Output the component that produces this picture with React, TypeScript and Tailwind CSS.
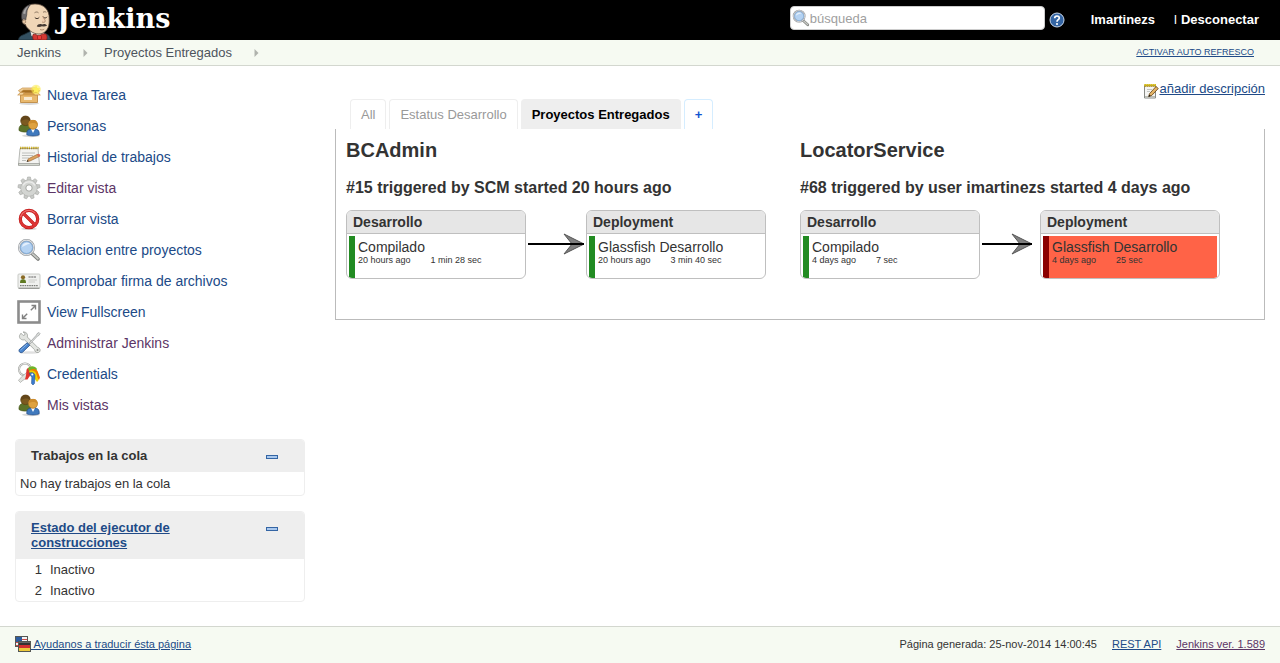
import type { ReactNode } from "react";

const HEAD_ICON = (
  <svg viewBox="0 0 36 40" className="h-10 w-9 shrink-0" aria-hidden="true">
    <path d="M1.500 40 C2 36.500 4 35.500 7 34.500 L14 31 L26 32 L32 35.500 L34 40 Z" fill="#335061" stroke="#1c2d37" strokeWidth="0.800" />
    <path d="M13 29 L14.500 36 L20 38 L27 34.500 L26.500 29 Z" fill="#efe9df" />
    <path d="M5.500 20 C4.500 10 9 4 18 4 C27 4 32.500 10 32.200 18.500 C32.500 25 31.500 31 25 33.500 C20 35 14.500 33 11 28.500 C9.500 27 8.800 26 8.500 24.500 C6 24.500 4.500 22 5.500 20 Z" fill="#f0d6b7" stroke="#5b4a3c" strokeWidth="0.800" />
    <path d="M5 20 C3.200 12.500 6.500 6.500 13.500 4.500 C11.500 7 10 9.500 9.800 13 C10 15.500 9 16.500 8.800 20 C7.500 18.800 6.200 18.800 5 20 Z" fill="#6d6b6d" stroke="#3a3839" strokeWidth="0.600" />
    <path d="M6 13.500 C7 9.500 9 7 11.500 6 C9.500 8.500 8.500 11 8.300 14 Z" fill="#a9a8a8" />
    <path d="M5.800 21 C7 19 9 20 8.600 22.500 C8 23.600 7.200 23.400 6.500 22.800" fill="#e6c6a2" stroke="#7c604a" strokeWidth="0.600" />
    <path d="M17.500 12.800 C19 11.700 20.500 11.800 21.500 12.800 M26 12.300 C27.200 11.500 28.500 11.600 29.300 12.300" fill="none" stroke="#6f5a49" strokeWidth="0.800" />
    <path d="M17.800 17.500 C19 19 21.200 19 22.300 17.300 M26.300 17 C27.500 18.400 29.300 18.200 30 16.800" fill="none" stroke="#3b2f27" strokeWidth="1" />
    <path d="M25.500 16 C27 19 29 20.500 28 21.900 C27 22.600 25.800 22.400 25 21.900" fill="#f0cdb0" stroke="#9a7558" strokeWidth="0.700" />
    <path d="M19.800 26.500 C20.500 24.300 23 23.600 25 24.500 C27 23.400 29.300 24 30 25.800 C28 26.800 26.300 26.700 25 26.200 C23.300 27 21.500 27.200 19.800 26.500 Z" fill="#453a34" />
    <path d="M23 29.500 C24.500 30.200 26 30 27.200 29.200" fill="none" stroke="#9a7558" strokeWidth="0.800" />
    <path d="M16 34.500 C18.500 33.500 20.500 35.500 22 36.500 C24 34 27.500 33 29.500 34.500 C30.300 36.500 30.300 38.500 29.500 40 L16.500 40 C15.500 38 15.500 36 16 34.500 Z" fill="#d33833" stroke="#7a1a17" strokeWidth="0.700" />
    <rect x="20.500" y="35.300" width="4" height="4.200" rx="1.200" fill="#ef3d3a" stroke="#7a1a17" strokeWidth="0.600" />
  </svg>
);

function Svg({ children }: { children: ReactNode }) {
  return (
    <svg viewBox="0 0 24 24" className="size-6 shrink-0" aria-hidden="true">
      {children}
    </svg>
  );
}

const PackageIcon = (
  <Svg>
    <ellipse cx="12" cy="20.500" rx="10" ry="1.500" fill="#000" opacity="0.150" />
    <path d="M3.500 9.500 H20.500 V19.500 H3.500 Z" fill="#e9b96e" stroke="#b98237" strokeWidth="0.800" />
    <path d="M4 10 H20 V12.500 H4 Z" fill="#d29a49" />
    <path d="M4 9.500 L5.500 5.500 H18.500 L20 9.500 Z" fill="#a87020" stroke="#b98237" strokeWidth="0.800" />
    <path d="M3.500 9.500 L0.700 12 H5.500 L7.500 9.500 Z M20.500 9.500 L23.300 12 H17.500 L16.500 9.500 Z" fill="#f5d49b" stroke="#c69047" strokeWidth="0.700" />
    <path d="M5.500 5 L1.500 7.500 L3 9.500 L6.500 7 H17.500 L21 9.500 L22.500 7.500 L18.500 5 Z" fill="#f2d097" stroke="#c69047" strokeWidth="0.700" />
    <rect x="7" y="14" width="8" height="3" fill="#f9ead0" />
    <circle cx="19" cy="6.500" r="4.800" fill="#fce94f" opacity="0.550" />
    <path d="M19 2 L20.200 5.100 L23.500 5.400 L21 7.500 L21.500 10.500 L18.900 8.800 L16.200 10 L17.200 7.200 L15 4.900 L18 5 Z" fill="#fdf05a" />
  </Svg>
);

const UsersIcon = (
  <Svg>
    <ellipse cx="14" cy="21.800" rx="9" ry="1.400" fill="#000" opacity="0.150" />
    <path d="M2 16.500 C1.700 12 4 10 8.500 10 C13 10 15 12 14.500 17 C10 18.500 5 18.500 2 16.500 Z" fill="#5c7329" stroke="#435617" strokeWidth="0.700" />
    <circle cx="8.500" cy="6.800" r="4.800" fill="#7c5a20" stroke="#5b3f10" strokeWidth="0.700" />
    <path d="M4.200 7 C3.500 3 6 1.700 9 1.900 C12 2 13.500 4 13 7 C11.500 4.800 7 5 4.200 7 Z" fill="#63461a" />
    <path d="M9.800 20.800 C9.500 16 11.500 14.800 16 14.800 C20.500 14.800 22.500 16 22.200 20.800 C19 22.300 13 22.300 9.800 20.800 Z" fill="#3f79bd" stroke="#204a87" strokeWidth="0.700" />
    <path d="M14 15 L16 19 L18 15 Z" fill="#fff" />
    <circle cx="16" cy="10.800" r="4.500" fill="#dfa23f" stroke="#a97422" strokeWidth="0.700" />
    <path d="M11.600 10.500 C11.200 7 13.500 5.900 16 6 C19.300 5.900 21 8 20.400 11 C18.500 8.500 15 8.500 11.600 10.500 Z" fill="#cd8c2c" />
  </Svg>
);

const NotepadIcon = (
  <Svg>
    <path d="M3 3.500 H21 L22.500 19.500 H1.500 Z" fill="#f4f4f2" stroke="#a5a7a2" strokeWidth="0.800" />
    <path d="M1.500 18.500 H22.500 V20.500 H1.500 Z" fill="#d3d7cf" stroke="#888a85" strokeWidth="0.600" />
    <path d="M3 3 H21.500" stroke="#a88a20" strokeWidth="2.600" strokeDasharray="1.300 0.900" />
    <path d="M3 2.500 H21.500" stroke="#d8c03c" strokeWidth="1.200" strokeDasharray="1.300 0.900" />
    <path d="M5 8 H18 M5 10.500 H16 M5 13 H12 M5 15.500 H9" stroke="#b0b2ae" strokeWidth="0.800" />
    <path d="M10 16.500 L11.300 13.800 L20.500 9.300 L22.300 11.500 L13 16 Z" fill="#dca25e" stroke="#8e6030" strokeWidth="0.600" />
    <path d="M19.800 9.600 L21 9 C22.800 8.500 24 10.200 22.700 11.400 L21.500 12 Z" fill="#d96a54" />
    <path d="M9.700 16.800 L10.600 15 L11.700 16.300 Z" fill="#222" />
  </Svg>
);

const GearIcon = (
  <Svg>
    <g fill="#c9cbc8" stroke="#a9aba7" strokeWidth="0.600">
      {[0, 40, 80, 120, 160, 200, 240, 280, 320].map((a) => (
        <path key={a} d="M9.800 5 L10.600 1 H13.400 L14.200 5 Z" transform={`rotate(${a} 12 12)`} />
      ))}
      <circle cx="12" cy="12" r="8.200" fill="#d3d5d2" />
    </g>
    <circle cx="12" cy="12" r="7.600" fill="#d3d5d2" />
    <path d="M6 9.500 A6.700 6.700 0 0 1 18 9.500" fill="none" stroke="#ececeb" strokeWidth="1.300" />
    <circle cx="12" cy="12" r="3.200" fill="#fff" stroke="#a3a5a1" strokeWidth="1" />
  </Svg>
);

const StopIcon = (
  <Svg>
    <ellipse cx="12" cy="21.800" rx="8" ry="1.300" fill="#000" opacity="0.150" />
    <circle cx="12" cy="12" r="8.700" fill="#fff" stroke="#b81414" strokeWidth="3.200" />
    <path d="M5.900 5.900 L18.100 18.100" stroke="#b81414" strokeWidth="3.400" />
    <circle cx="12" cy="12" r="8.700" fill="none" stroke="#dd3535" strokeWidth="2.200" />
    <path d="M5.900 5.900 L18.100 18.100" stroke="#dd3535" strokeWidth="2.400" />
    <path d="M3.500 10 A8.800 8.800 0 0 1 18.200 5.800" fill="none" stroke="#f07c7c" strokeWidth="0.900" />
  </Svg>
);

const MagnifierArt = (
  <>
    <path d="M15 15.500 L21 21" stroke="#7c7e7b" strokeWidth="3.600" strokeLinecap="round" />
    <path d="M15.300 15.700 L20.800 20.700" stroke="#c8cac6" strokeWidth="1.800" strokeLinecap="round" />
    <circle cx="9.500" cy="9.500" r="7.400" fill="#a9caee" stroke="#8e9195" strokeWidth="2.200" />
    <circle cx="9.500" cy="9.500" r="7.400" fill="none" stroke="#dde0e3" strokeWidth="1.100" />
    <circle cx="9.500" cy="9.500" r="6" fill="#b4d2f2" stroke="#7ba6d3" strokeWidth="0.800" />
    <path d="M5 9 A5 5 0 0 1 13 5.700 C10 6 7 8 5 9 Z" fill="#e3effc" />
  </>
);
const SearchIcon = <Svg>{MagnifierArt}</Svg>;

const IdCardIcon = (
  <Svg>
    <rect x="1" y="5" width="22" height="14" rx="1" fill="#f0f1ef" stroke="#c3c5c1" strokeWidth="0.900" />
    <path d="M1.500 19.300 H22.500" stroke="#888a85" />
    <circle cx="6" cy="8.300" r="2.100" fill="#8a6a25" />
    <path d="M3 14 C3 11 4 10.300 6 10.300 C8.200 10.300 9 11 9 14 Z" fill="#5f7a22" />
    <path d="M11.500 8 H19" stroke="#666" strokeWidth="1.100" strokeDasharray="2.200 0.500" />
    <path d="M11.500 11 H20 M11.500 13 H18" stroke="#c5c7c3" strokeWidth="0.900" />
    <path d="M3 16.600 H21" stroke="#7b7d79" strokeWidth="1.100" strokeDasharray="1.600 0.700" />
  </Svg>
);

const FullscreenIcon = (
  <Svg>
    <rect x="1.500" y="1.500" width="21" height="21" fill="#fff" stroke="#8c8c8c" strokeWidth="2.600" />
    <path d="M13.800 10.200 L18.300 5.700 M14.500 5.500 H18.500 V9.500 M10.200 13.800 L5.700 18.300 M5.500 14.500 V18.500 H9.500" fill="none" stroke="#808080" strokeWidth="1.400" />
  </Svg>
);

const ToolsIcon = (
  <Svg>
    <ellipse cx="12" cy="21.500" rx="10" ry="1.300" fill="#000" opacity="0.120" />
    <path d="M2.500 4.500 L4 2.200 L6.200 4.500 L7.800 4 L8 2.200 L6 1 C9.500 0.800 11 3 10.300 6 L20.800 16.500 C23.500 17 24 20.500 21.500 21.500 C19 22 17.800 20.500 17.700 18.800 L7.500 8.800 C4.500 9.300 2 7.700 2.500 4.500 Z" fill="#e2e4e0" stroke="#9c9f9a" strokeWidth="0.800" />
    <circle cx="20.500" cy="19" r="1" fill="#8b8e89" />
    <path d="M12 12.200 L19.500 4 L20 2.700 L22 1.500 L23 2.500 L21.800 4.500 L20.500 5 L13 13 Z" fill="#dfe1dd" stroke="#979a9c" strokeWidth="0.700" />
    <path d="M10.200 11.800 L12.800 14.200 L5.500 21.300 C3.500 22.500 1.200 20.500 2.300 18.500 Z" fill="#4a86cf" stroke="#204a87" strokeWidth="0.800" />
    <path d="M10 13.200 L3.500 19.200" stroke="#86b2e6" strokeWidth="1" />
  </Svg>
);

const KeysIcon = (
  <Svg>
    <circle cx="8" cy="7.500" r="6" fill="none" stroke="#9a9c98" strokeWidth="2" />
    <circle cx="8" cy="7.500" r="6" fill="none" stroke="#eeeeec" strokeWidth="1" />
    <path d="M10 10 L14 13 L5 19 L3.500 20.500 L1.500 18.500 L3 16.500 Z" fill="#e0e2de" stroke="#9a9c98" strokeWidth="0.600" />
    <path d="M9.500 8 C10 5.500 13 4.500 15 6.500 L14 12 L10.500 17.500 L8 17.500 L9 13.500 Z" fill="#e0342e" />
    <path d="M11 6.500 C13 3.500 18 3.500 20 7 L18 11 L13 12 Z" fill="#6fb52b" />
    <path d="M12 9 C14 7 18 6 20.500 9 L23 15.500 L22 18 L20 16.500 L17 11.500 Z" fill="#f57900" />
    <path d="M12 9 C15 8 18 9 19 11 L20 14 L21.500 18.500 L20 20 L15 13 Z" fill="#edd400" />
    <path d="M12.500 11.500 C14.500 9.500 18 11 18 14 L17.500 21.500 L16 23 L14.500 21.500 L14.800 15.500 Z" fill="#3b7ccc" stroke="#204a87" strokeWidth="0.500" />
    <circle cx="15.300" cy="12.500" r="1" fill="#fff" />
  </Svg>
);

const NoteEditIcon = (
  <svg viewBox="0 0 16 16" className="mt-[3px] size-4 shrink-0" aria-hidden="true">
    <path d="M1.500 2.500 H12.500 V15 H1.500 Z" fill="#f5f5f3" stroke="#888a85" />
    <path d="M2 13.500 H12" stroke="#babdb6" />
    <path d="M1.500 2.500 H13" stroke="#a8861a" strokeWidth="3" strokeDasharray="1.300 0.700" />
    <path d="M1.500 2 H13" stroke="#edd400" strokeWidth="1.500" strokeDasharray="1.300 0.700" />
    <path d="M4 6.500 H9 M4 8.500 H7" stroke="#c4c6c2" />
    <path d="M5.700 13.500 L6.500 10.700 L13 3.500 L15.300 5.500 L8.800 12.400 Z" fill="#e3b366" stroke="#614014" strokeWidth="0.800" />
    <path d="M5.500 13.800 L6.200 11.800 L7.700 13.100 Z" fill="#111" />
  </svg>
);

const FlagsIcon = (
  <svg viewBox="0 0 16 16" className="size-4 shrink-0" aria-hidden="true">
    <rect x="0.500" y="0.500" width="12" height="10" fill="#f3f3f3" stroke="#555753" />
    <path d="M1 3.500 H12 M1 6.500 H12 M1 9.500 H12" stroke="#cf4a48" />
    <rect x="1" y="1" width="6" height="5" fill="#2d5c9e" />
    <rect x="3.500" y="5.500" width="12" height="10" fill="#333" stroke="#555753" />
    <rect x="4" y="9" width="11" height="3" fill="#d03030" />
    <rect x="4" y="12" width="11" height="3" fill="#edc93b" />
    <rect x="4" y="6" width="11" height="1" fill="#666" />
  </svg>
);

const BLUE = "text-[#204a87]";
const PURPLE = "text-[#5c3566]";

const TASKS = [
  { label: "Nueva Tarea", icon: PackageIcon, color: BLUE },
  { label: "Personas", icon: UsersIcon, color: BLUE },
  { label: "Historial de trabajos", icon: NotepadIcon, color: BLUE },
  { label: "Editar vista", icon: GearIcon, color: PURPLE },
  { label: "Borrar vista", icon: StopIcon, color: BLUE },
  { label: "Relacion entre proyectos", icon: SearchIcon, color: BLUE },
  { label: "Comprobar firma de archivos", icon: IdCardIcon, color: BLUE },
  { label: "View Fullscreen", icon: FullscreenIcon, color: BLUE },
  { label: "Administrar Jenkins", icon: ToolsIcon, color: PURPLE },
  { label: "Credentials", icon: KeysIcon, color: BLUE },
  { label: "Mis vistas", icon: UsersIcon, color: PURPLE },
];

type Stage = { name: string; task: string; when: string; duration: string; failed?: boolean };
type Pipeline = { name: string; build: string; arrow: number; stages: [Stage, Stage] };

const PIPELINES: Pipeline[] = [
  {
    name: "BCAdmin",
    build: "#15 triggered by SCM started 20 hours ago",
    arrow: 58,
    stages: [
      { name: "Desarrollo", task: "Compilado", when: "20 hours ago", duration: "1 min 28 sec" },
      { name: "Deployment", task: "Glassfish Desarrollo", when: "20 hours ago", duration: "3 min 40 sec" },
    ],
  },
  {
    name: "LocatorService",
    build: "#68 triggered by user imartinezs started 4 days ago",
    arrow: 52,
    stages: [
      { name: "Desarrollo", task: "Compilado", when: "4 days ago", duration: "7 sec" },
      { name: "Deployment", task: "Glassfish Desarrollo", when: "4 days ago", duration: "25 sec", failed: true },
    ],
  },
];

function StageBox({ stage }: { stage: Stage }) {
  return (
    <section className="w-[180px] shrink-0 overflow-hidden rounded-md border border-[#bfbfbf]">
      <h3 className="border-b border-[#bfbfbf] bg-[#e6e6e6] px-1.5 text-sm leading-[22px] font-bold">{stage.name}</h3>
      <div
        className={`mx-0.5 mt-0.5 h-[42px] border-l-6 pt-[3px] pl-[3px] ${
          stage.failed ? "border-[#8b0000] bg-[#ff6347]" : "border-[#228b22]"
        }`}
      >
        <div className="text-sm leading-4">{stage.task}</div>
        <div className="flex gap-5 text-[9px] leading-[10px]">
          <span>{stage.when}</span>
          <span>{stage.duration}</span>
        </div>
      </div>
    </section>
  );
}

function Arrow({ length }: { length: number }) {
  return (
    <svg className="mt-[23px] h-[22px] w-15 shrink-0" viewBox="0 0 60 22" aria-hidden="true">
      <path d={`M${length - 20} 1 L${length} 11 L${length - 20} 21 L${length - 12} 11 Z`} fill="#808080" stroke="#555" strokeWidth="1" />
      <path d={`M2 11 H${length}`} stroke="#000" strokeWidth="2" />
    </svg>
  );
}

function Pane({ title, children }: { title: ReactNode; children: ReactNode }) {
  return (
    <section className="overflow-hidden rounded border border-[#eee] bg-white">
      <div className="flex items-start justify-between border-b border-[#eee] bg-[#eee] pt-2 pr-[26px] pb-2 pl-[15px]">
        <h2 className="w-[180px] text-[13px] leading-[15px] font-bold">{title}</h2>
        <button type="button" aria-label="Contraer" className="mt-[7px] h-1 w-3 border border-[#3465a4] bg-[#a9c8ee]" />
      </div>
      {children}
    </section>
  );
}

export default function App() {
  return (
    <div className="flex min-h-screen flex-col bg-white font-['Liberation_Sans',Arial,sans-serif] text-[13px] text-[#333]">
      <header className="flex h-10 items-center justify-between bg-black pr-[21px] pl-[17px]">
        <a href="#" className="flex items-start gap-1 text-white">
          {HEAD_ICON}
          <span className="font-['DejaVu_Serif',Georgia,serif] text-[27px] leading-[38px] font-bold">Jenkins</span>
        </a>
        <div className="flex items-center">
          <div className="relative mr-1 -mt-1">
            <input
              type="text"
              aria-label="búsqueda"
              placeholder="búsqueda"
              className="block h-6 w-[255px] rounded border border-[#ccc] bg-white pl-[19px] text-[13px] placeholder:text-[#a0a0a0]"
            />
            <svg viewBox="0 0 24 24" className="absolute top-[3px] left-0.5 size-[18px]" aria-hidden="true">
              {MagnifierArt}
            </svg>
          </div>
          <a href="#" aria-label="Ayuda" className="mr-[26px]">
            <svg viewBox="0 0 16 16" className="size-4" aria-hidden="true">
              <circle cx="8" cy="8" r="7" fill="#3465a4" stroke="#c9d8ec" />
              <path d="M5.700 6.300 C5.700 3.300 10.300 3.300 10.300 6 C10.300 7.800 8 7.600 8 9.700" fill="none" stroke="#fff" strokeWidth="1.700" />
              <circle cx="8" cy="12" r="1.100" fill="#fff" />
            </svg>
          </a>
          <a href="#" className="mr-[19px] font-bold text-white">lmartinezs</a>
          <span className="mr-1 text-white">l</span>
          <a href="#" className="font-bold text-white">Desconectar</a>
        </div>
      </header>

      <div className="flex h-[26px] items-center justify-between border-b border-[#d3d7cf] bg-[#f6faf2] pr-[26px] pl-[17px]">
        <nav className="flex items-center text-[#4d545d]">
          <a href="#">Jenkins</a>
          <svg viewBox="0 0 5 8" className="mr-4 ml-[22px] h-2 w-[5px]" aria-hidden="true">
            <path d="M0.500 0 L4.500 4 L0.500 8 Z" fill="#b0b3ad" />
          </svg>
          <a href="#">Proyectos Entregados</a>
          <svg viewBox="0 0 5 8" className="ml-[22px] h-2 w-[5px]" aria-hidden="true">
            <path d="M0.500 0 L4.500 4 L0.500 8 Z" fill="#b0b3ad" />
          </svg>
        </nav>
        <a href="#" className="text-[9px] text-[#204a87] uppercase underline">Activar auto refresco</a>
      </div>

      <div className="flex flex-1 gap-[30px] px-[15px] pt-[13px] pb-6">
        <aside className="w-[290px] shrink-0">
          <nav className="mb-[19px] flex flex-col pl-0.5">
            {TASKS.map((t) => (
              <a key={t.label} href="#" className={`flex h-[31px] items-center gap-1.5 text-sm ${t.color}`}>
                {t.icon}
                {t.label}
              </a>
            ))}
          </nav>
          <div className="flex flex-col gap-[15px]">
            <Pane title="Trabajos en la cola">
              <p className="px-1 pt-px leading-[22px]">No hay trabajos en la cola</p>
            </Pane>
            <Pane title={<a href="#" className="text-[#204a87] underline">Estado del ejecutor de construcciones</a>}>
              <table aria-label="Ejecutores">
                <tbody>
                  {[1, 2].map((n) => (
                    <tr key={n} className="leading-[21px]">
                      <td className="w-[34px] pr-2 text-right">{n}</td>
                      <td>Inactivo</td>
                    </tr>
                  ))}
                </tbody>
              </table>
            </Pane>
          </div>
        </aside>

        <main className="min-w-0 flex-1">
          <div className="flex h-5 items-center justify-end">
            <a href="#" className="flex items-center text-[#204a87]">
              {NoteEditIcon}
              <span className="underline">añadir descripción</span>
            </a>
          </div>
          <nav className="flex h-[30px] gap-[3px] pl-[15px] leading-[30px]">
            <a href="#" className="rounded-t border border-b-0 border-[#eee] px-2.5 text-[#999]">All</a>
            <a href="#" className="rounded-t border border-b-0 border-[#eee] px-2.5 text-[#999]">Estatus Desarrollo</a>
            <a href="#" className="rounded-t border border-b-0 border-[#eee] bg-[#eee] px-2.5 font-bold text-black">Proyectos Entregados</a>
            <a href="#" className="rounded-t border border-b-0 border-[#d5edff] px-2.5 font-bold text-[#1054d0]">+</a>
          </nav>
          <div className="grid grid-cols-2 border border-t-0 border-[#bbb] px-2.5 pt-2.5 pb-10">
            {PIPELINES.map((p) => (
              <article key={p.name} className="min-w-0">
                <h1 className="text-xl leading-[22px] font-bold">{p.name}</h1>
                <h2 className="mt-4 mb-3 text-base leading-[21px] font-bold">{p.build}</h2>
                <div className="flex items-start">
                  <StageBox stage={p.stages[0]} />
                  <Arrow length={p.arrow} />
                  <StageBox stage={p.stages[1]} />
                </div>
              </article>
            ))}
          </div>
        </main>
      </div>

      <footer className="flex h-[37px] items-center justify-between border-t border-[#d3d7cf] bg-[#f6faf2] px-[15px] pb-0.5 text-[11px]">
        <a href="#" className="flex items-center text-[#204a87]">
          {FlagsIcon}
          <span className="whitespace-pre underline"> Ayudanos a traducir ésta página</span>
        </a>
        <div className="flex gap-[15px]">
          <span>Página generada: 25-nov-2014 14:00:45</span>
          <a href="#" className="text-[#204a87] underline">REST API</a>
          <a href="#" className="text-[#5c3566] underline">Jenkins ver. 1.589</a>
        </div>
      </footer>
    </div>
  );
}
